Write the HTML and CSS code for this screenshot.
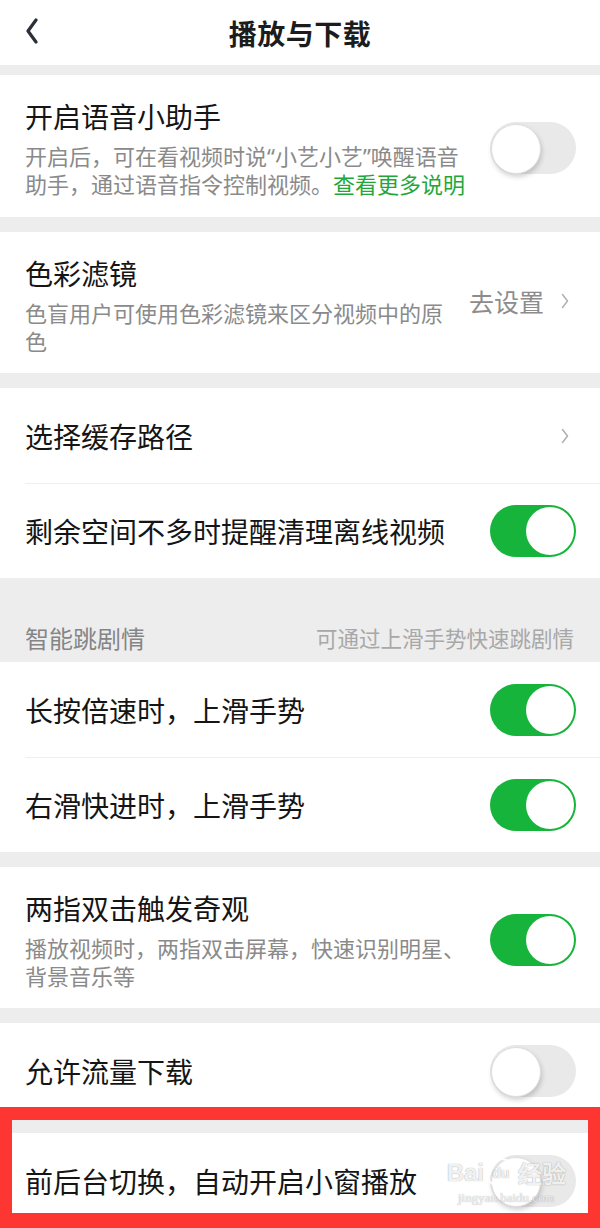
FILE: index.html
```html
<!DOCTYPE html>
<html lang="zh-CN">
<head>
    <meta charset="UTF-8">
    <meta name="viewport" content="width=device-width, initial-scale=1.0">
    <title>播放与下载</title>
    <link rel="stylesheet" href="styles.css">
</head>
<body>
    <header class="topbar">
        <button class="back" aria-label="返回">
            <svg width="14" height="26" viewBox="0 0 14 26">
                <polyline points="11,2 3,13 11,24" fill="none" stroke="#2b2f36" stroke-width="3.2" stroke-linecap="round" stroke-linejoin="round"/>
            </svg>
        </button>
        <h1>播放与下载</h1>
    </header>

    <main class="settings">
        <section class="group">
            <div class="row row-tall">
                <div class="row-text">
                    <div class="row-title">开启语音小助手</div>
                    <p class="row-desc">开启后，可在看视频时说“小艺小艺”唤醒语音助手，通过语音指令控制视频。<a href="#" class="link">查看更多说明</a></p>
                </div>
                <span class="switch"></span>
            </div>
        </section>

        <section class="group">
            <div class="row row-tall">
                <div class="row-text">
                    <div class="row-title">色彩滤镜</div>
                    <p class="row-desc">色盲用户可使用色彩滤镜来区分视频中的原色</p>
                </div>
                <span class="row-value">去设置
                    <svg class="chevron" width="8" height="16" viewBox="0 0 8 16">
                        <polyline points="1.5,1.5 6.5,8 1.5,14.5" fill="none" stroke="#b0b0b0" stroke-width="1.5" stroke-linecap="round" stroke-linejoin="round"/>
                    </svg>
                </span>
            </div>
        </section>

        <section class="group">
            <div class="row">
                <div class="row-title">选择缓存路径</div>
                <svg class="chevron" width="8" height="16" viewBox="0 0 8 16">
                    <polyline points="1.5,1.5 6.5,8 1.5,14.5" fill="none" stroke="#b0b0b0" stroke-width="1.5" stroke-linecap="round" stroke-linejoin="round"/>
                </svg>
            </div>
            <div class="row">
                <div class="row-title">剩余空间不多时提醒清理离线视频</div>
                <span class="switch on"></span>
            </div>
        </section>

        <div class="group-head">
            <span class="group-name">智能跳剧情</span>
            <span class="group-hint">可通过上滑手势快速跳剧情</span>
        </div>

        <section class="group">
            <div class="row">
                <div class="row-title">长按倍速时，上滑手势</div>
                <span class="switch on"></span>
            </div>
            <div class="row">
                <div class="row-title">右滑快进时，上滑手势</div>
                <span class="switch on"></span>
            </div>
        </section>

        <section class="group">
            <div class="row row-tall">
                <div class="row-text">
                    <div class="row-title">两指双击触发奇观</div>
                    <p class="row-desc">播放视频时，两指双击屏幕，快速识别明星、背景音乐等</p>
                </div>
                <span class="switch on"></span>
            </div>
        </section>

        <section class="group">
            <div class="row">
                <div class="row-title">允许流量下载</div>
                <span class="switch"></span>
            </div>
        </section>

        <section class="group group-marked">
            <div class="row">
                <div class="row-title">前后台切换，自动开启小窗播放</div>
                <span class="switch"></span>
            </div>
            <div class="highlight"></div>
            <div class="watermark">
                <span class="wm-logo">Bai<span class="wm-paw">du</span>经验</span>
                <span class="wm-url">jingyan.baidu.com</span>
            </div>
        </section>
    </main>
</body>
</html>
```

FILE: styles.css
```css
:root {
    --page-bg: #ededed;
    --text-color: #151515;
    --desc-color: #8a8a8a;
    --green: #16b43b;
    --link-green: #1fa83a;
    --mark-red: #fd3631;
}

* {
    box-sizing: border-box;
}

body {
    margin: 0;
    background-color: var(--page-bg);
    font-family: "Noto Sans CJK SC", "Noto Sans", sans-serif;
    color: var(--text-color);
}

.topbar {
    height: 65px;
    background-color: white;
    display: flex;
    align-items: center;
    justify-content: center;
    position: relative;
    margin-bottom: 10px;
}

.topbar h1 {
    margin: 0;
    font-size: 28px;
    font-weight: 700;
    color: #1c1c1c;
    letter-spacing: 0.5px;
}

.back {
    position: absolute;
    left: 25px;
    top: 18px;
    padding: 0;
    border: none;
    background: none;
}

.group {
    background-color: white;
    margin-bottom: 15px;
}

.row {
    height: 95px;
    display: flex;
    align-items: center;
    justify-content: space-between;
    padding: 0 24px 0 25px;
    position: relative;
}

.row + .row::before {
    content: "";
    position: absolute;
    top: 0;
    left: 25px;
    right: 0;
    height: 1px;
    background-color: #efefef;
}

.row-tall {
    height: auto;
    padding-top: 23px;
    padding-bottom: 18px;
    gap: 22px;
}

.group:first-of-type .row-tall {
    padding-bottom: 19px;
}

.row-text {
    flex: 1;
}

.row-title {
    font-size: 28px;
    line-height: 36px;
}

/* latin quotes stay narrow, as on the device */
.row-desc {
    margin: 8px 0 0;
    font-family: "Noto Sans", "Noto Sans CJK SC", sans-serif;
    font-size: 22px;
    line-height: 28px;
    color: var(--desc-color);
}

.link {
    color: var(--link-green);
    text-decoration: none;
}

.row-value {
    display: flex;
    align-items: center;
    gap: 17px;
    font-size: 25px;
    color: #8c8c8c;
    margin-top: -8px;
}

.chevron {
    margin-right: 7px;
    display: block;
}

.group-head {
    height: 69px;
    padding: 19px 26px 0 25px;
    display: flex;
    align-items: center;
    justify-content: space-between;
}

.group-name {
    font-size: 24px;
    color: #858585;
}

.group-hint {
    font-size: 21.5px;
    color: #a8a8a8;
}

/* toggle switch */
.switch {
    flex: none;
    width: 86px;
    height: 52px;
    border-radius: 26px;
    background-color: #e9e9e9;
    position: relative;
}

.switch::after {
    content: "";
    position: absolute;
    top: 2px;
    left: 1px;
    width: 48px;
    height: 48px;
    border-radius: 50%;
    background-color: white;
    border: 1px solid #dedede;
    box-shadow: 1px 3px 5px rgba(0, 0, 0, 0.18);
}

.switch.on {
    background-color: var(--green);
}

.switch.on::after {
    left: auto;
    right: 2px;
    border: none;
    box-shadow: none;
}

/* red marker drawn over the last item */
.group-marked {
    position: relative;
    margin-bottom: 0;
}

.highlight {
    position: absolute;
    top: -26px;
    left: 0;
    right: 0;
    bottom: 0;
    border: solid var(--mark-red);
    border-width: 13px 12px 15px 12px;
}

.watermark {
    position: absolute;
    right: 34px;
    top: 22px;
    display: flex;
    flex-direction: column;
    align-items: center;
    color: rgba(255, 255, 255, 0.9);
    text-shadow: 0 0 1px rgba(0, 0, 0, 0.45);
}

.wm-logo {
    font-family: "Liberation Sans", sans-serif;
    font-size: 24px;
    font-weight: 700;
    display: flex;
    align-items: center;
    gap: 2px;
}

.wm-paw {
    font-size: 14px;
    width: 30px;
    height: 30px;
    border-radius: 50%;
    border: 2px solid rgba(255, 255, 255, 0.9);
    display: inline-flex;
    align-items: center;
    justify-content: center;
}

.wm-url {
    font-family: "Liberation Serif", serif;
    font-size: 13px;
    line-height: 14px;
    margin-top: 1px;
}
```
